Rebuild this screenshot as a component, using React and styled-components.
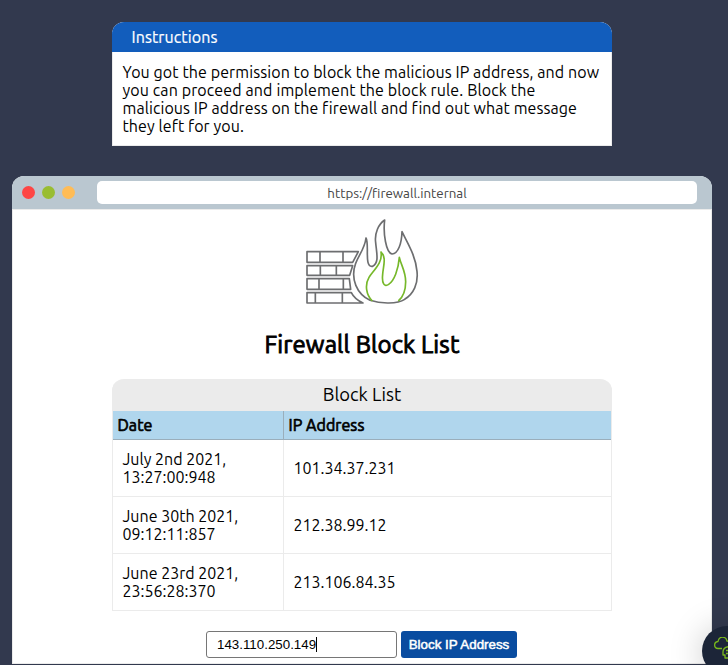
import React from "react";
import styled, { createGlobalStyle } from "styled-components";

const GlobalStyle = createGlobalStyle`
  *, *::before, *::after { box-sizing: border-box; }
  html, body { margin: 0; height: 665px; overflow: hidden; }
  body { background: #32394e; color: #000; font-family: "Ubuntu", "Noto Sans", sans-serif; }
`;

const Page = styled.main`
  display: flex;
  flex-direction: column;
  align-items: flex-start;
  gap: 30px;
  height: 665px;
  padding: 22px 12px 0;
`;

const Card = styled.section`
  width: 500px;
  height: 124px;
  margin-left: 100px;
  background: #fff;
  border: 1px solid #ebebeb;
  border-top: 0;
  border-radius: 12px 12px 0 0;
`;

const CardTitle = styled.header`
  height: 30px;
  margin: 0 -1px;
  padding-left: 19.5px;
  border-radius: 12px 12px 0 0;
  background: #125dbc;
  color: #fff;
  font-size: 16px;
  line-height: 31px;
  letter-spacing: 0.1px;
  -webkit-text-stroke: 0.2px #fff;
`;

const CardBody = styled.div`
  padding: 11px 10px 0 9.5px;
`;

const Line = styled.div`
  height: 18px;
  font-size: 16px;
  line-height: 18px;
  white-space: nowrap;
  letter-spacing: ${(p) => p.$track || 0}px;
`;

const Browser = styled.section`
  display: flex;
  flex-direction: column;
  width: 700px;
  height: 488px;
  background: #fff;
  border-radius: 12px 12px 0 0;
`;

const Toolbar = styled.header`
  display: flex;
  align-items: center;
  flex: none;
  height: 34px;
  padding: 0 15px 0 10px;
  background: #bac7d0;
  border-bottom: 1px solid #ebebeb;
  border-radius: 12px 12px 0 0;
`;

const Dots = styled.div`
  display: flex;
  gap: 7px;
  width: 75px;
`;

const Dot = styled.span`
  width: 13px;
  height: 13px;
  border-radius: 50%;
  background: ${(p) => p.$color};
`;

const Address = styled.div`
  width: 600px;
  height: 23px;
  border-radius: 5px;
  background: #fff;
  color: #444;
  font-size: 13.33px;
  line-height: 25px;
  text-align: center;
`;

const Content = styled.div`
  display: flex;
  flex-direction: column;
  align-items: center;
  flex: 1;
  border: 1px solid #ebebeb;
  border-top: 0;
  padding-top: 8px;
`;

const Logo = styled.svg`
  width: 114px;
  height: 86px;
  flex: none;
  fill: none;
  stroke: #6d6e70;
  stroke-width: 5;
  stroke-linejoin: round;
`;

const Title = styled.h1`
  height: 32px;
  margin: 25px 0 18px;
  font-size: 24px;
  font-weight: 400;
  line-height: 32px;
  letter-spacing: 0.16px;
  -webkit-text-stroke: 0.9px #000;
`;

const Table = styled.div`
  width: 500px;
  flex: none;
  border: 1px solid #ebebeb;
  border-top: 0;
  border-radius: 12px 12px 0 0;
`;

const Caption = styled.div`
  height: 32px;
  margin: 0 -1px;
  border-radius: 12px 12px 0 0;
  background: #ebebeb;
  font-size: 18.4px;
  line-height: 31px;
  text-align: center;
`;

const Row = styled.div`
  display: grid;
  grid-template-columns: 171px 1fr;
  height: 57px;
  border-bottom: 1px solid #ebebeb;
  &:last-child { border-bottom: 0; height: 56px; }
`;

const HeadRow = styled(Row)`
  height: 29px;
  background: #b0d6ed;
  border-bottom-color: #9aaebb;
`;

const HeadCell = styled.div`
  padding-left: 4.5px;
  font-size: 16px;
  line-height: 29px;
  letter-spacing: 0.07px;
  -webkit-text-stroke: 0.7px #000;
  &:first-child { border-right: 1px solid #9aaebb; }
`;

const Cell = styled.div`
  display: flex;
  flex-direction: column;
  justify-content: center;
  padding-left: 9.5px;
  &:first-child { border-right: 1px solid #ebebeb; }
`;

const Form = styled.form`
  display: flex;
  gap: 4px;
  margin: 20px 1px 0 0;
`;

const Field = styled.div`
  display: flex;
  align-items: center;
  width: 191px;
  height: 27px;
  padding-left: 10px;
  border: 1px solid #767676;
  border-radius: 3px;
  background: #fff;
  font: 13.33px "Liberation Sans", Arial, sans-serif;
`;

const Caret = styled.span`
  width: 1px;
  height: 15px;
  background: #000;
`;

const BlockButton = styled.button`
  width: 116px;
  height: 27px;
  padding: 0;
  border: 0;
  border-radius: 3px;
  background: #094ca0;
  color: #fff;
  font: 13.33px "Liberation Sans", Arial, sans-serif;
  -webkit-text-stroke: 0.5px #fff;
  white-space: nowrap;
`;

const Badge = styled.div`
  position: fixed;
  left: 702px;
  top: 626px;
  width: 50px;
  height: 50px;
  border-radius: 50%;
  background: #1c2538;
  box-shadow: 0 2px 34px rgba(0, 0, 0, 0.22);
`;

const BadgeIcon = styled.svg`
  display: block;
  width: 34px;
  height: 30px;
  margin: 11px 0 0 10px;
  fill: none;
  stroke: #79b91c;
  stroke-width: 1.3;
  stroke-linejoin: round;
`;

const instructions = [
  { text: "You got the permission to block the malicious IP address, and now", track: 0.09 },
  { text: "you can proceed and implement the block rule. Block the", track: 0.12 },
  { text: "malicious IP address on the firewall and find out what message", track: 0.08 },
  { text: "they left for you.", track: 0.08 },
];

const blocked = [
  { date: "July 2nd 2021,", time: "13:27:00:948", ip: "101.34.37.231" },
  { date: "June 30th 2021,", time: "09:12:11:857", ip: "212.38.99.12" },
  { date: "June 23rd 2021,", time: "23:56:28:370", ip: "213.106.84.35" },
];

function FirewallLogo() {
  return (
    <Logo viewBox="45 24 342 258" aria-label="Firewall">
      <path d="M51 125H205L188 157H51ZM90 125V157M159 125V157" />
      <path d="M51 167H188L179 196H51ZM91 167V196M139 167V196" />
      <path d="M51 206H178L182 238H51ZM87 206V238M160 206V238" />
      <path d="M51 248H184Q194 268 219 279H51ZM76 248V279M157 248V279" />
      <path d="M228 84C224 116 208 132 197 160C180 207 201 252 240 271C273 282 323 282 344 268C371 252 385 221 381 184C377 137 353 101 336 65C335 99 325 131 306 132C288 128 279 70 284 30C266 42 253 69 257 98C260 131 268 158 248 169C221 174 239 105 228 84Z" />
      <path stroke="#76b82a" d="M247 273C228 254 224 224 237 202C250 181 279 159 273 126C290 142 280 166 278 193C275 220 283 232 296 223C313 212 325 178 328 142C333 165 347 184 347 215C347 241 340 260 325 273" />
    </Logo>
  );
}

export default function App() {
  return (
    <>
      <GlobalStyle />
      <Page>
        <Card>
          <CardTitle>Instructions</CardTitle>
          <CardBody>
            {instructions.map((l) => (
              <Line key={l.text} $track={l.track}>{l.text}</Line>
            ))}
          </CardBody>
        </Card>
        <Browser>
          <Toolbar>
            <Dots>
              <Dot $color="#fe4645" />
              <Dot $color="#99bd32" />
              <Dot $color="#ffbc56" />
            </Dots>
            <Address>https://firewall.internal</Address>
          </Toolbar>
          <Content>
            <FirewallLogo />
            <Title>Firewall Block List</Title>
            <Table>
              <Caption>Block List</Caption>
              <HeadRow>
                <HeadCell>Date</HeadCell>
                <HeadCell>IP Address</HeadCell>
              </HeadRow>
              {blocked.map((b) => (
                <Row key={b.ip}>
                  <Cell>
                    <Line>{b.date}</Line>
                    <Line>{b.time}</Line>
                  </Cell>
                  <Cell><Line>{b.ip}</Line></Cell>
                </Row>
              ))}
            </Table>
            <Form>
              <Field>143.110.250.149<Caret /></Field>
              <BlockButton type="button">Block IP Address</BlockButton>
            </Form>
          </Content>
        </Browser>
      </Page>
      <Badge>
        <BadgeIcon viewBox="0 0 34 30">
          <path d="M10 11.5H6C1.5 11.5 1.5 5 6 4.5C7 -1.5 14 -1 15 4C20 4 20 9 17 10.5" />
          <path d="M13 21V18H11V15C11 9 20 8 24 12V21Z" />
          <path d="M14 13.5H17M14 16.5H17" />
        </BadgeIcon>
      </Badge>
    </>
  );
}
